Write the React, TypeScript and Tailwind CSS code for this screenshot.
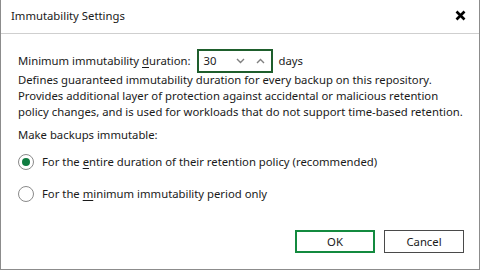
import React from "react";

const font = { fontFamily: '"Noto Sans", "Open Sans", sans-serif' };

const Chevron = ({ up }: { up?: boolean }) => (
  <svg width="9" height="6" viewBox="0 0 9 6" className="text-[#808080]">
    <path
      d={up ? "M1 5 L4.5 1.5 L8 5" : "M1 1 L4.5 4.5 L8 1"}
      fill="none"
      stroke="currentColor"
      strokeWidth="1.4"
    />
  </svg>
);

const Radio = ({ checked, children }: { checked?: boolean; children: React.ReactNode }) => (
  <div className="flex items-center h-[16px]">
    <span className="w-[16px] h-[16px] shrink-0 rounded-full border border-[#8a8a8a] bg-white flex items-center justify-center">
      {checked && <span className="w-[8px] h-[8px] rounded-full bg-[#107c41]" />}
    </span>
    <span className="ml-[8px]">{children}</span>
  </div>
);

export default function App() {
  return (
    <div
      style={font}
      className="w-[480px] h-[270px] bg-white border-l border-r border-b border-[#8c8c8c] flex flex-col text-[11.3px] text-[#1a1a1a] leading-[16px] whitespace-nowrap"
    >
      {/* Title bar */}
      <div className="h-[34px] shrink-0 border-b border-[#cfcfcf] flex items-center justify-between pl-[10px] pr-[12px] text-[11.3px]">
        <span className="mb-[1px]">Immutability Settings</span>
        <svg width="11" height="11" viewBox="0 0 11 11" className="mr-[1px] mb-[3px]">
          <path d="M1.5 1.5 L9.5 9.5 M9.5 1.5 L1.5 9.5" stroke="#000" strokeWidth="2.6" />
        </svg>
      </div>

      {/* Body */}
      <div className="flex-1 flex flex-col pl-[17px] pr-[15px] pt-[15px]">
        <div className="flex items-center h-[24px]">
          <span>
            Minimum immutability <span className="underline underline-offset-2">d</span>uration:
          </span>
          <div className="ml-[6px] w-[76px] h-[24px] border-2 border-[#1e5e2c] flex items-center pl-[5px] pr-[6px]">
            <span className="flex-1">30</span>
            <span className="flex items-center gap-[11px]">
              <Chevron />
              <Chevron up />
            </span>
          </div>
          <span className="ml-[6px]">days</span>
        </div>

        <p className="mt-[-1px]">
          Defines guaranteed immutability duration for every backup on this repository.
          <br />
          Provides additional layer of protection against accidental or malicious retention
          <br />
          policy changes, and is used for workloads that do not support time-based retention.
        </p>

        <div className="mt-[7px]">Make backups immutable:</div>

        <div className="mt-[11px] flex flex-col gap-[16px]">
          <Radio checked>
            For the <span className="underline underline-offset-2">e</span>ntire duration of their retention
            policy (recommended)
          </Radio>
          <Radio>
            For the <span className="underline underline-offset-2">m</span>inimum immutability period only
          </Radio>
        </div>

        <div className="mt-[28px] flex justify-end gap-[9px]">
          <button className="w-[80px] h-[23px] border-2 border-[#138a3f] bg-white text-[#1a1a1a]">
            OK
          </button>
          <button className="w-[80px] h-[23px] border border-[#4a4a4a] bg-white text-[#1a1a1a]">
            Cancel
          </button>
        </div>
      </div>
    </div>
  );
}
